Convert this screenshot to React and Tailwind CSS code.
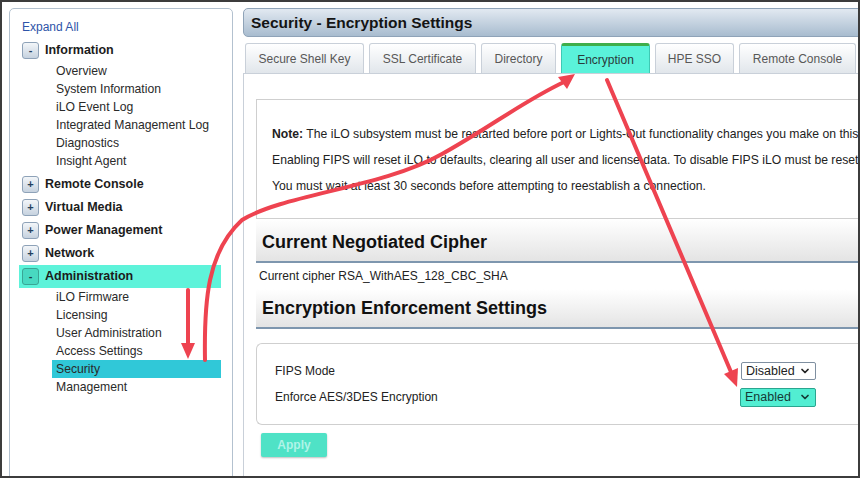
import { ChevronDown } from 'lucide-react';

const infoItems = ['Overview', 'System Information', 'iLO Event Log', 'Integrated Management Log', 'Diagnostics', 'Insight Agent'];
const adminItems = ['iLO Firmware', 'Licensing', 'User Administration', 'Access Settings', 'Security', 'Management'];
const tabs = [
  { label: 'Secure Shell Key', w: 'w-[119px]' },
  { label: 'SSL Certificate', w: 'w-[107px]' },
  { label: 'Directory', w: 'w-[75px]' },
  { label: 'Encryption', w: 'w-[89px]', active: true },
  { label: 'HPE SSO', w: 'w-[79px]' },
  { label: 'Remote Console', w: 'w-[117px]' },
];

function Toggle({ open, active }) {
  return (
    <span
      className={`flex h-[17px] w-[17px] shrink-0 items-center justify-center rounded-[3px] border text-[11px] font-bold leading-none ${
        active
          ? 'border-[#3aa595] bg-[#48d9c1] text-[#1d3c44]'
          : 'border-[#8ea2b8] bg-linear-to-b from-[#f3f6f9] to-[#c6d2df] text-[#24405e]'
      }`}
    >
      {open ? '-' : '+'}
    </span>
  );
}

function Category({ label, open, active }) {
  return (
    <div className={`flex h-[23px] items-center gap-[6px] pl-[3px] ${active ? 'bg-[#5ef3da]' : ''}`}>
      <Toggle open={open} active={active} />
      <span className="text-[12.5px] font-bold text-[#1c1c1c]">{label}</span>
    </div>
  );
}

function SubItem({ label, active }) {
  return (
    <div className={`ml-[33px] flex h-[18px] items-center pl-[4px] text-[12.2px] text-[#2a2a2a] ${active ? 'bg-[#30c8d8]' : ''}`}>
      {label}
    </div>
  );
}

function Select({ value, active }) {
  return (
    <div
      className={`flex items-center justify-between rounded-[2px] border pl-[4px] pr-[4px] text-[12.5px] ${
        active ? 'h-[19px] w-[76px] border-[#2aa58f] bg-[#52eed2] text-[#153a36]' : 'h-[18px] w-[75px] border-[#7f8fa0] bg-white text-[#222]'
      }`}
    >
      <span>{value}</span>
      <ChevronDown size={12} strokeWidth={3.5} />
    </div>
  );
}

function Arrows() {
  return (
    <svg className="pointer-events-none absolute inset-0" width="860" height="478" viewBox="0 0 860 478">
      <g fill="none" stroke="#ee4350" strokeWidth="4" strokeLinecap="round">
        <path d="M203,358 C202,300 205,250 240,218 C282,192 380,186 440,152 C490,124 520,100 562,80" />
        <path d="M186,288 L186,342" />
        <path d="M605,78 L729,370" />
      </g>
      <g fill="#ee4350">
        <polygon points="573,72 565,87 556,75" />
        <polygon points="186,357 179,341 193,341" />
        <polygon points="735,385 736,366 722,372" />
      </g>
    </svg>
  );
}

export default function App() {
  return (
    <div
      className="relative flex h-[478px] w-[860px] overflow-hidden border-2 border-[#3c3c3c] bg-white"
      style={{ fontFamily: '"Liberation Sans", Arial, sans-serif' }}
    >
      {/* left tree */}
      <aside className="ml-[7px] mt-[6px] h-[480px] w-[224px] shrink-0 rounded-t-[5px] border border-[#b3c1cf] pt-[10px]">
        <div className="ml-[9px] mr-[11px]">
          <div className="flex h-[16px] items-center pl-[3px] text-[12px] text-[#2e54a8]">Expand All</div>
          <div className="mt-[4px]">
            <Category label="Information" open />
            {infoItems.map((item) => (
              <SubItem key={item} label={item} />
            ))}
            <div className="h-[3px]" />
            <Category label="Remote Console" />
            <Category label="Virtual Media" />
            <Category label="Power Management" />
            <Category label="Network" />
            <Category label="Administration" open active />
            {adminItems.map((item) => (
              <SubItem key={item} label={item} active={item === 'Security'} />
            ))}
          </div>
        </div>
      </aside>

      {/* right content */}
      <main className="ml-[10px] mt-[6px] flex h-[480px] w-[640px] shrink-0 flex-col">
        <div className="flex h-[29px] items-center rounded-l-[5px] border border-[#8fa3b8] bg-linear-to-b from-[#e2e9f1] to-[#a8bccf] pl-[7px]">
          <h1 className="text-[15.5px] font-bold text-[#141414]">Security - Encryption Settings</h1>
        </div>

        <div className="mt-[6px] flex gap-[5px] pl-[2px]">
          {tabs.map((tab) => (
            <div
              key={tab.label}
              className={`flex h-[30px] items-center justify-center rounded-t-[3px] border border-b-0 text-[12px] ${tab.w} ${
                tab.active
                  ? 'border-[#3ec9b4] border-t-[3px] border-t-[#3fae4a] bg-[#5af2da] text-[#2a3a3a]'
                  : 'border-[#c9d0d9] bg-linear-to-b from-white to-[#e1e6eb] text-[#585858]'
              }`}
            >
              {tab.label}
            </div>
          ))}
        </div>

        <section className="flex-1 border-l border-t border-[#c9d0d9] pl-[12px] pt-[25px]">
          <div className="h-[120px] border border-r-0 border-[#cfcfcf] pl-[15px] pt-[21px] text-[12.2px] leading-[26px] whitespace-nowrap text-[#222]">
            <p>
              <b>Note:</b> The iLO subsystem must be restarted before port or Lights-Out functionality changes you make on this page take effect.
            </p>
            <p>Enabling FIPS will reset iLO to defaults, clearing all user and license data. To disable FIPS iLO must be reset to factory defaults.</p>
            <p>You must wait at least 30 seconds before attempting to reestablish a connection.</p>
          </div>

          <div className="flex h-[44px] items-center border-b-2 border-[#7e96ae] bg-linear-to-b from-white to-[#e4e4e4] pl-[6px] pt-[4px]">
            <h2 className="text-[18px] font-bold text-[#111]">Current Negotiated Cipher</h2>
          </div>
          <div className="flex h-[26px] items-center pl-[3px] text-[12px] text-[#222]">Current cipher RSA_WithAES_128_CBC_SHA</div>

          <div className="flex h-[40px] items-center border-b-2 border-[#7e96ae] bg-linear-to-b from-white to-[#e4e4e4] pl-[6px]">
            <h2 className="text-[18px] font-bold text-[#111]">Encryption Enforcement Settings</h2>
          </div>

          <div className="mt-[14px] h-[82px] rounded-l-[6px] border border-r-0 border-[#cfcfcf] pl-[18px] pt-[14px] text-[12px] text-[#222]">
            <div className="flex h-[26px] items-center">
              <span className="w-[466px]">FIPS Mode</span>
              <Select value="Disabled" />
            </div>
            <div className="flex h-[26px] items-center">
              <span className="w-[465px]">Enforce AES/3DES Encryption</span>
              <Select value="Enabled" active />
            </div>
          </div>

          <button className="ml-[5px] mt-[8px] flex h-[24px] w-[66px] items-center justify-center rounded-[2px] bg-[#4fe2c6] text-[12px] font-bold text-[#b0f4e8] shadow-[0_1px_2px_rgba(0,0,0,0.25)]">
            Apply
          </button>
        </section>
      </main>

      <Arrows />
    </div>
  );
}
